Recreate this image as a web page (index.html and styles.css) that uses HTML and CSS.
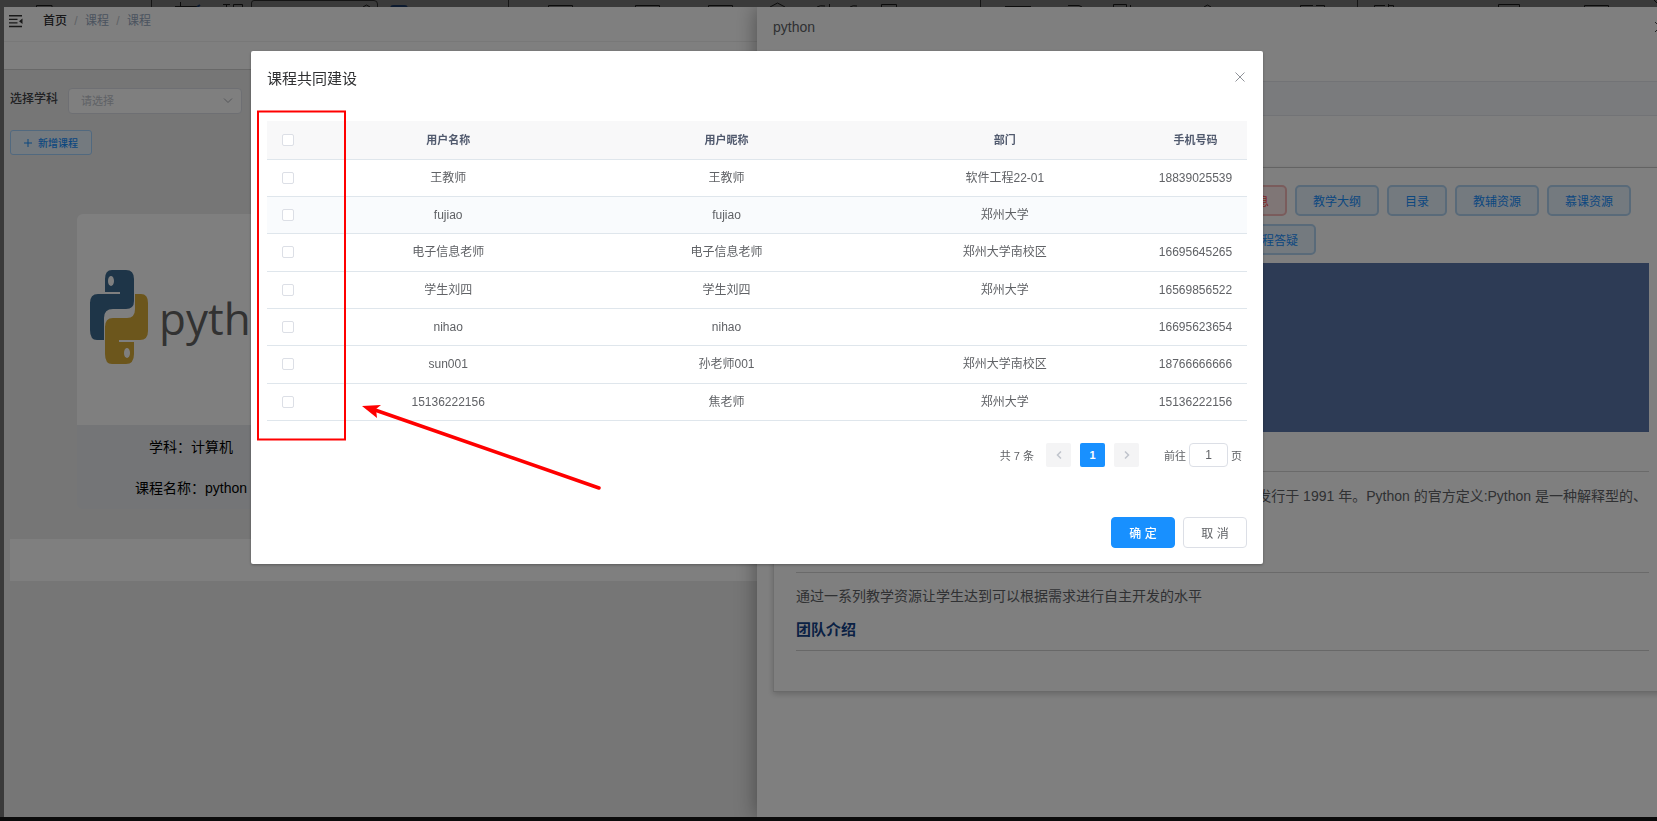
FILE: index.html
```html
<!DOCTYPE html>
<html lang="zh-CN">
<head>
<meta charset="utf-8">
<title>课程共同建设</title>
<link rel="stylesheet" href="styles.css">
</head>
<body>
<div class="frame">
  <div class="topstrip" aria-hidden="true">
    <svg width="1657" height="7" viewBox="0 0 1657 7" fill="none" stroke="#191919" stroke-width="1">
      <path d="M36.500 7V5.500H52V7M175 6.500H198M180.500 2V7M223 4.500H230M226.500 4V7M233.500 7V4.500H242.500V7M363 7L366.500 5L370 7M548.500 7V5.500H572.500V7M635.500 7V5.500H659.500V7M708.500 7V5.500H732.500V7M770 7L777.500 3L785 7M817 7Q820 5 825 6M829.500 4V7M850 7Q853 5 857 6M881.500 7V4.500H896.500V7M1005 6.500H1031M1068 5.500H1079L1082 7M1113.500 7V4.500H1126.500V7M1130.500 5V7M1204 7L1207.500 5L1211 7M1300.500 7V5.500H1313M1316 5.500H1324.500V7M1374.500 7V5.500H1385M1388.500 4V7M1388 5.500H1393.500V7M1498.500 7V4.500H1519.500V7M1584.500 7V5.500H1608.500V7M1654 0L1657 3"/>
      <path stroke="#2b2b2b" d="M151.500 0V7M508.500 0V7M980.500 0V7M1357.500 0V7M251.500 7V3Q251.500 0.500 254 0.500H374Q377.500 0.500 377.500 4V7"/>
      <path stroke="#18345f" stroke-width="2" d="M391 7Q392 6 394 6H404Q406 6 407 7M197 7L200 5"/>
    </svg>
  </div>
  <div class="app">
    <main class="page">
      <header class="navbar">
        <svg class="fold" width="14" height="13" viewBox="0 0 14 13"><path d="M0 0h13v1.500H0zM0 3.700h8.500v1.300H0zM0 7.200h8.500v1.300H0zM0 10.800h13v1.500H0zM13.500 3.400v5.600L10 6.200z" fill="#333"/></svg>
        <nav class="crumbs"><a href="#" class="home">首页</a><i>/</i><span>课程</span><i>/</i><span>课程</span></nav>
      </header>
      <div class="tabs"></div>
      <div class="content">
        <div class="filter">
          <label for="subject">选择学科</label>
          <div class="selectwrap">
            <select id="subject"><option>请选择</option></select>
            <svg width="10" height="6" viewBox="0 0 10 6" fill="none" stroke="#a8abb2"><path d="M1 .5l4 4 4-4"/></svg>
          </div>
        </div>
        <button class="add"><svg width="8" height="8" viewBox="0 0 8 8" stroke="#1890ff"><path d="M4 0v8M0 4h8"/></svg>新增课程</button>
        <article class="course">
          <div class="cover">
            <svg width="204" height="110" viewBox="88 262 204 110">
              <path fill="#3d6a90" d="M112 270h14q8 0 8 9v22q0 8-8 8h-13q-9 0-9 9v22H97q-7 0-7-10v-27q0-9 8-9h22v-2h-15v-13q0-9 7-9z"/>
              <path fill="#d8ac38" d="M135 294h6q7 0 7 9v28q0 9-8 9h-21v2h15v12q0 10-8 10h-14q-7 0-7-10v-27q0-9 8-9h14q8 0 8-9z"/>
              <ellipse cx="111" cy="281" rx="3" ry="5" fill="#fff"/><ellipse cx="127" cy="353" rx="3" ry="5" fill="#fff"/>
              <text x="159" y="335" class="wordmark">python</text>
            </svg>
          </div>
          <div class="info"><p>学科：计算机</p><p>课程名称：python</p></div>
        </article>
        <div class="pager"></div>
      </div>
    </main>
    <aside class="drawer">
      <header class="drawer-head"><span>python</span><button class="x" aria-label="关闭"><svg width="12" height="12" viewBox="0 0 12 12" stroke="#444"><path d="M1 1l10 10M11 1L1 11"/></svg></button></header>
      <div class="band"></div>
      <div class="blank"></div>
      <section class="panel">
        <div class="tags first"><button class="danger">课程信息</button><button>教学大纲</button><button>目录</button><button>教辅资源</button><button>慕课资源</button></div>
        <div class="tags second"><button>课程答疑</button></div>
        <div class="banner"></div>
        <div class="intro"><p>版发行于 1991 年。Python 的官方定义:Python 是一种解释型的、</p></div>
        <div class="goal"><p>通过一系列教学资源让学生达到可以根据需求进行自主开发的水平</p><h3>团队介绍</h3></div>
        <div class="team"></div>
      </section>
    </aside>
  </div>
</div>
<div class="mask">
  <section class="modal" role="dialog" aria-labelledby="dlg">
    <header class="modal-head"><h2 id="dlg">课程共同建设</h2><button class="x" aria-label="关闭"><svg width="10" height="10" viewBox="0 0 10 10" stroke="#909399"><path d="M.5.500l9 9M9.500.500l-9 9"/></svg></button></header>
    <table>
      <colgroup><col class="c-check"><col><col><col><col class="c-phone"></colgroup>
      <thead><tr><th><input type="checkbox" aria-label="全选"></th><th>用户名称</th><th>用户昵称</th><th>部门</th><th>手机号码</th></tr></thead>
      <tbody>
        <tr><td><input type="checkbox" aria-label="王教师"></td><td>王教师</td><td>王教师</td><td>软件工程22-01</td><td>18839025539</td></tr>
        <tr class="hover"><td><input type="checkbox" aria-label="fujiao"></td><td>fujiao</td><td>fujiao</td><td>郑州大学</td><td></td></tr>
        <tr><td><input type="checkbox" aria-label="电子信息老师"></td><td>电子信息老师</td><td>电子信息老师</td><td>郑州大学南校区</td><td>16695645265</td></tr>
        <tr><td><input type="checkbox" aria-label="学生刘四"></td><td>学生刘四</td><td>学生刘四</td><td>郑州大学</td><td>16569856522</td></tr>
        <tr><td><input type="checkbox" aria-label="nihao"></td><td>nihao</td><td>nihao</td><td></td><td>16695623654</td></tr>
        <tr><td><input type="checkbox" aria-label="sun001"></td><td>sun001</td><td>孙老师001</td><td>郑州大学南校区</td><td>18766666666</td></tr>
        <tr><td><input type="checkbox" aria-label="15136222156"></td><td>15136222156</td><td>焦老师</td><td>郑州大学</td><td>15136222156</td></tr>
      </tbody>
    </table>
    <div class="pagination">
      <span class="total">共 7 条</span>
      <button class="pg" aria-label="上一页"><svg width="6" height="8" viewBox="0 0 6 8" fill="none" stroke="#c0c4cc" stroke-width="1.500"><path d="M5 .5L1.500 4 5 7.500"/></svg></button>
      <button class="pg on">1</button>
      <button class="pg" aria-label="下一页"><svg width="6" height="8" viewBox="0 0 6 8" fill="none" stroke="#c0c4cc" stroke-width="1.500"><path d="M1 .5L4.500 4 1 7.500"/></svg></button>
      <label class="jump">前往<input type="text" value="1">页</label>
    </div>
    <footer class="actions"><button class="ok">确 定</button><button class="cancel">取 消</button></footer>
    <svg class="marks" width="360" height="450" viewBox="0 0 360 450" fill="none" stroke="#f00" aria-hidden="true">
      <rect x="7" y="60.500" width="87" height="328" stroke-width="2"/>
      <path d="M124 359L348 437" stroke-width="3.500" stroke-linecap="round"/>
      <path d="M111 355l19-1-5 4 1 9z" fill="#f00" stroke="none"/>
    </svg>
  </section>
</div>
</body>
</html>
```

FILE: styles.css
```css
* { box-sizing: border-box; }
body, p, h2, h3 { margin: 0; }
body {
  font-family: "Liberation Sans", "Noto Sans CJK SC", sans-serif;
  font-size: 12px;
  color: #606266;
}
button, input, select { font: inherit; color: inherit; }
button { padding: 0; cursor: pointer; }
a { text-decoration: none; }
svg { display: block; }

.frame {
  height: 100vh;
  display: flex;
  flex-direction: column;
  background: #747474;
  border-bottom: 4px solid #171717;
}
.topstrip { height: 7px; overflow: hidden; }
.app {
  flex: 1;
  min-height: 0;
  position: relative;
  overflow: hidden;
  margin-left: 4px;
  background: #ececec;
}

/* course list */
.navbar {
  height: 35px;
  display: flex;
  padding: 8px 5px 0;
  gap: 20px;
  background: #fff;
  border-bottom: 1px solid #f0f0f0;
}
.crumbs { display: flex; line-height: 12px; height: 12px; color: #97a8be; }
.crumbs i { width: 18px; text-align: center; font-style: normal; color: #c0c4cc; }
.crumbs .home { color: #303133; font-weight: 500; }
.tabs { height: 28px; background: #fff; border-bottom: 1px solid #d0d0d0; }
.content { padding: 18px 6px 0; }
.filter { display: flex; gap: 10px; height: 26px; line-height: 22px; }
.filter label { font-weight: 500; color: #404246; }
.selectwrap { position: relative; width: 174px; }
.selectwrap svg { position: absolute; right: 9px; top: 10px; }
.selectwrap select {
  appearance: none;
  width: 100%;
  height: 26px;
  padding: 0 12px;
  border: 1px solid #dcdfe6;
  border-radius: 4px;
  background: #fff;
  font-size: 11px;
  color: #c0c4cc;
}
.add {
  margin-top: 16px;
  width: 82px;
  height: 25px;
  display: flex;
  align-items: center;
  justify-content: center;
  gap: 6px;
  font-size: 10px;
  font-weight: 500;
  color: #1890ff;
  background: #e8f4ff;
  border: 1px solid #a3d3ff;
  border-radius: 3px;
}
.course {
  width: 228px;
  margin: 59px 0 30px 67px;
  border-radius: 6px;
  overflow: hidden;
  background: #e8ebef;
}
.cover { background: #fff; height: 211px; padding: 48px 11px 0; }
.wordmark { font-family: "Liberation Sans Narrow", "Open Sans", sans-serif; font-size: 44px; fill: #646464; }
.info {
  height: 84px;
  padding-top: 12px;
  display: flex;
  flex-direction: column;
  gap: 21px;
  text-align: center;
  font-size: 14px;
  line-height: 20px;
  color: #000;
}
.pager { height: 42px; background: #fff; }

/* course drawer, slides over the list */
.drawer {
  position: absolute;
  top: 0;
  right: 0;
  bottom: 0;
  width: 900px;
  background: #fff;
  box-shadow: 0 0 20px rgba(0, 0, 0, .4);
}
.drawer-head { height: 74px; padding: 9px 0 0 16px; display: flex; justify-content: space-between; font-size: 14px; line-height: 22px; color: #606266; }
.drawer-head .x { margin-right: -9px; height: 22px; }
.x { border: 0; background: none; }
.band { height: 35px; background: #f5f7fa; border: solid #e4e7ed; border-width: 1px 0; }
.blank { height: 52px; border-bottom: 1px solid #d0d0d0; }
.panel {
  margin: 0 -20px 0 16px;
  padding: 17px 28px 0 22px;
  border-left: 1px solid #dcdcdc;
  border-bottom: 1px solid #d4d4d4;
  box-shadow: 0 2px 6px rgba(0, 0, 0, .2);
}
.tags { display: flex; gap: 8px; }
.tags.first { padding-left: 407px; }
.tags.second { margin: 8px 0; padding-left: 436px; }
.tags button {
  height: 31px;
  padding: 0 16px;
  border: 2px solid #b3d4f2;
  border-radius: 5px;
  background: #e8f4ff;
  color: #1890ff;
  white-space: nowrap;
}
.tags .danger { color: #ff4949; background: #ffeded; border-color: #f5b8b8; }
.banner { height: 169px; background: #5a76aa; }
.intro { margin-top: 39px; height: 101px; padding: 13px 2px 0; border-top: 1px solid #d4d4d4; text-align: right; }
.intro, .goal { font-size: 14px; line-height: 22px; color: #606266; }
.goal { height: 78px; padding-top: 12px; border-top: 1px solid #d4d4d4; }
.goal h3 { margin-top: 12px; font-size: 15px; line-height: 22px; color: #144289; }
.team { height: 41px; border-top: 1px solid #d0d0d0; }

/* member dialog */
.mask { position: fixed; inset: 7px 0 4px 4px; padding: 44px 394px 0 247px; background: rgba(0, 0, 0, .5); }
.frame::before { content: ""; position: fixed; inset: 0; z-index: 1; background: rgba(0, 0, 0, .5); clip-path: polygon(0 0, 100% 0, 100% 7px, 4px 7px, 4px calc(100% - 4px), 100% calc(100% - 4px), 100% 100%, 0 100%); }
.modal {
  position: relative;
  padding: 16px;
  background: #fff;
  border-radius: 2px;
  box-shadow: 0 1px 3px rgba(0, 0, 0, .3);
}
.modal-head { display: flex; justify-content: space-between; height: 54px; padding-right: 2px; }
.modal-head h2 { font-size: 15px; font-weight: 400; line-height: 24px; color: #303133; }
.modal-head .x { height: 20px; }
table { width: 100%; height: 300px; table-layout: fixed; border-collapse: collapse; text-align: center; }
thead tr { height: 38px; }
.c-check { width: 42px; }
.c-phone { width: 103px; }
th, td { padding: 0; border-bottom: 1px solid #dfe6ec; line-height: 16px; }
th { background: #f8f8f9; color: #515a6e; font-size: 11px; font-weight: 700; }
.hover { background: #f9fbfd; }
table input {
  appearance: none;
  display: block;
  width: 12px;
  height: 12px;
  margin: 0 auto;
  border: 1px solid #dcdfe6;
  border-radius: 2px;
  background: #fff;
}
.pagination { margin-top: 22px; display: flex; justify-content: flex-end; align-items: center; gap: 9px; padding-right: 5px; font-size: 11px; }
.total { margin-right: 3px; }
.pg { width: 25px; height: 24px; display: grid; place-items: center; border: 0; border-radius: 2px; background: #f4f4f5; }
.pg.on { background: #1890ff; color: #fff; font-weight: 700; }
.jump { display: flex; align-items: center; gap: 3px; margin-left: 16px; }
.jump input { width: 39px; height: 24px; padding: 0; border: 1px solid #dcdfe6; border-radius: 4px; text-align: center; font-size: 12px; }
.actions { margin-top: 50px; display: flex; justify-content: flex-end; gap: 8px; }
.actions button { width: 64px; height: 31px; border: 1px solid #dcdfe6; border-radius: 4px; background: #fff; }
.actions .ok { background: #1890ff; border-color: #1890ff; color: #fff; font-weight: 500; }
.marks { position: absolute; left: 0; top: 0; pointer-events: none; }
```
